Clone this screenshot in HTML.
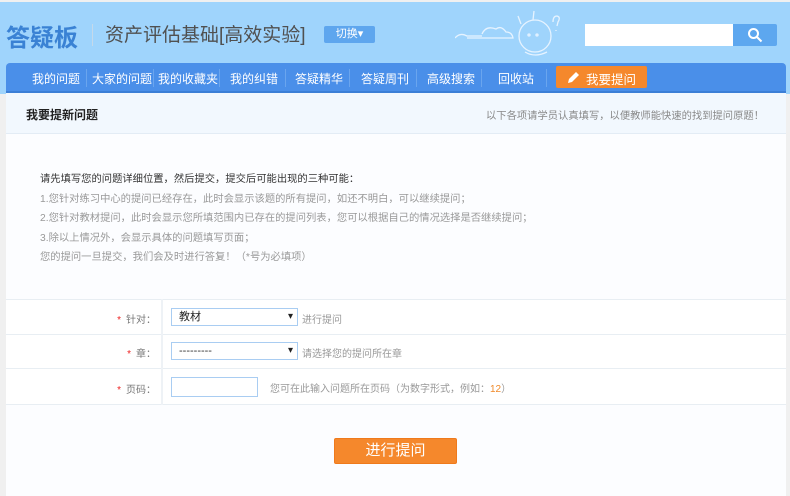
<!DOCTYPE html>
<html><head><meta charset="utf-8"><style>
*{margin:0;padding:0;box-sizing:border-box}
body{width:790px;height:496px;overflow:hidden;background:#f0f0f0;font-family:"Liberation Sans","Noto Sans CJK SC",sans-serif;position:relative}
.hdr{position:absolute;left:0;top:2px;width:790px;height:92px;background:#9fd4fc}
.abs{position:absolute}
.nav{position:absolute;left:6px;top:63px;width:780px;height:30px;background:#4a8fe9;border-radius:4px 4px 0 0;border-bottom:2px solid #3c7fd6}
.nav span{position:absolute;top:7px;color:#fff;font-size:12px}
.nav i{position:absolute;top:6px;width:1px;height:18px;background:#6aa5ee}
.main{position:absolute;left:6px;top:93px;width:780px;height:403px;background:#fcfdff}
.sub{position:absolute;left:0;top:0;width:780px;height:41px;background:#f2f8fe;border-bottom:1px solid #e3ecf5}
.txt{position:absolute;left:34px;top:77px;font-size:10.3px;line-height:19.5px;color:#999}
.row{position:absolute;left:0;width:780px;border-top:1px solid #e8eef3}
.lab{position:absolute;right:630px;font-size:10px;color:#777}
.lab b{color:#e22;font-weight:normal;margin-right:5px}
.sel{position:absolute;left:165px;width:127px;height:18px;border:1px solid #a9cdf2;background:#fff;font-size:11px;padding-left:7px;line-height:16px}
.sel:after{content:"▾";position:absolute;right:4px;top:0;font-size:10px;color:#222}
.hint{position:absolute;font-size:10px;color:#999}
</style></head><body>
<div class="hdr"></div>
<div class="abs" style="left:6px;top:18px;font-size:24px;font-weight:bold;color:#3a82d4">答疑板</div>
<div class="abs" style="left:92px;top:24px;width:1px;height:22px;background:#c5d9ea"></div>
<div class="abs" style="left:105px;top:20px;font-size:19px;color:#505050">资产评估基础[高效实验]</div>
<div class="abs" style="left:324px;top:26px;width:51px;height:17px;background:#5ea6ee;border-radius:2px;color:#fff;font-size:11px;text-align:center;line-height:17px">切换▾</div>
<svg class="abs" style="left:455px;top:8px" width="130" height="50" viewBox="0 0 130 50" fill="none" stroke="#e6f3ff" stroke-width="1.3"><path d="M0 30 q5-6 12-2 h15 M27 26 q4-9 14-5 q5-4 10 3 q6 0 7 6 h-46"/><circle cx="80" cy="28" r="16"/><path d="M70 44 q10 6 22 0 M66 16 l-3-8 M78 12 l1-9 M98 14 q0-6 4-6 q4 1 1 6 l-1 4 M101 22 v1"/><circle cx="74" cy="27" r="1"/><circle cx="82" cy="27" r="1"/></svg>
<div class="abs" style="left:585px;top:24px;width:148px;height:22px;background:#fff"></div>
<div class="abs" style="left:733px;top:24px;width:44px;height:22px;background:#5da7ef;border-radius:0 2px 2px 0"></div>
<svg class="abs" style="left:747px;top:27px" width="16" height="16" viewBox="0 0 16 16" fill="none" stroke="#fff" stroke-width="2"><circle cx="6.5" cy="6.5" r="4.5"/><path d="M10 10l4.5 4.5"/></svg>
<div class="nav">
<span style="left:26px">我的问题</span><i style="left:80px"></i>
<span style="left:86px">大家的问题</span><i style="left:147px"></i>
<span style="left:152px">我的收藏夹</span><i style="left:213px"></i>
<span style="left:224px">我的纠错</span><i style="left:279px"></i>
<span style="left:289px">答疑精华</span><i style="left:343px"></i>
<span style="left:355px">答疑周刊</span><i style="left:410px"></i>
<span style="left:421px">高级搜索</span><i style="left:475px"></i>
<span style="left:492px">回收站</span><i style="left:540px"></i>
<div class="abs" style="left:550px;top:3px;width:91px;height:22px;background:#f5882c;border-radius:2px"></div>
<svg class="abs" style="left:560px;top:8px" width="14" height="14" viewBox="0 0 14 14"><path d="M2 12 l1-4 7-7 3 3-7 7z" fill="#fff"/></svg>
<span style="left:580px;top:6px;font-size:12.5px">我要提问</span>
</div>
<div class="main">
<div class="sub"><div class="abs" style="left:20px;top:13px;font-size:12px;font-weight:bold;color:#222">我要提新问题</div>
<div class="abs" style="right:22px;top:14px;font-size:10.3px;color:#888">以下各项请学员认真填写，以便教师能快速的找到提问原题！</div></div>
<div class="txt"><div style="color:#333">请先填写您的问题详细位置，然后提交，提交后可能出现的三种可能：</div>
<div>1.您针对练习中心的提问已经存在，此时会显示该题的所有提问，如还不明白，可以继续提问；</div>
<div>2.您针对教材提问，此时会显示您所填范围内已存在的提问列表，您可以根据自己的情况选择是否继续提问；</div>
<div>3.除以上情况外，会显示具体的问题填写页面；</div>
<div>您的提问一旦提交，我们会及时进行答复！（*号为必填项）</div></div>
<div class="row" style="top:206px;height:35px;background:#fff"></div>
<div class="row" style="top:241px;height:34px;background:#fff"></div>
<div class="row" style="top:275px;height:37px;background:#fff;border-bottom:1px solid #e8eef3"></div>
<div class="abs" style="left:155px;top:206px;width:2px;height:106px;background:#eef2f6"></div>
<div class="lab" style="top:218px"><b>*</b>针对：</div>
<div class="sel" style="top:215px;color:#222">教材</div><div class="hint" style="left:296px;top:218px">进行提问</div>
<div class="lab" style="top:252px"><b>*</b>章：</div>
<div class="sel" style="top:249px;color:#333">---------</div><div class="hint" style="left:296px;top:252px">请选择您的提问所在章</div>
<div class="lab" style="top:288px"><b>*</b>页码：</div>
<div class="abs" style="left:165px;top:284px;width:87px;height:20px;border:1px solid #a9cdf2;background:#fff"></div>
<div class="hint" style="left:264px;top:287px">您可在此输入问题所在页码（为数字形式，例如：<span style="color:#f08a2a">12</span>）</div>
<div class="abs" style="left:328px;top:345px;width:123px;height:26px;background:#f5882c;border:1px solid #ef7a1c;border-radius:2px;color:#fff;font-size:15px;text-align:center;line-height:24px">进行提问</div>
</div>
</body></html>
